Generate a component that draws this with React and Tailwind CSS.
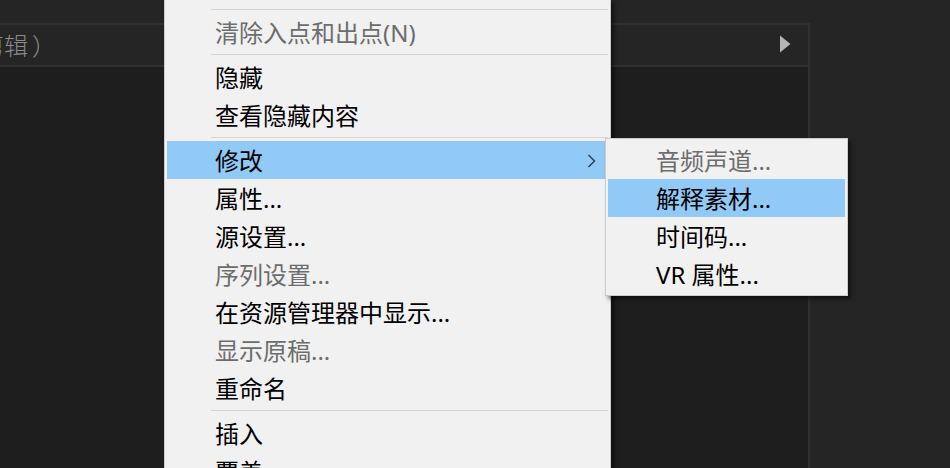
const SANS = "font-['Noto_Sans','Noto_Sans_CJK_SC',sans-serif]";

const menu = [
  { type: 'separator' },
  { label: '清除入点和出点(N)', disabled: true },
  { type: 'separator' },
  { label: '隐藏' },
  { label: '查看隐藏内容' },
  { type: 'separator' },
  { label: '修改', active: true, submenu: true },
  { label: '属性...' },
  { label: '源设置...' },
  { label: '序列设置...', disabled: true },
  { label: '在资源管理器中显示...' },
  { label: '显示原稿...', disabled: true },
  { label: '重命名' },
  { type: 'separator' },
  { label: '插入' },
  { label: '覆盖' },
];

const modifyMenu = [
  { label: '音频声道...', disabled: true },
  { label: '解释素材...', active: true },
  { label: '时间码...' },
  { label: 'VR 属性...' },
];

function Chevron() {
  return (
    <svg className="mr-2 h-4 w-4 shrink-0" viewBox="0 0 16 16" fill="none" aria-hidden="true">
      <path d="M4.5 2 L10.5 8 L4.5 14" stroke="#2b3b48" strokeWidth="1.4" />
    </svg>
  );
}

function MenuItem({ label, disabled, active, submenu }) {
  return (
    <button
      type="button"
      role="menuitem"
      disabled={disabled}
      aria-haspopup={submenu ? 'menu' : undefined}
      aria-expanded={submenu ? true : undefined}
      className={`flex h-[38px] w-full items-center pt-0.5 pl-12 text-left text-2xl whitespace-nowrap ${
        active ? 'bg-[#91c9f7]' : ''
      } ${disabled ? 'text-[#6d6d6d]' : 'text-black'}`}
    >
      <span className="flex-1">{label}</span>
      {submenu && <Chevron />}
    </button>
  );
}

function Menu({ items, label, className }) {
  return (
    <div
      role="menu"
      aria-label={label}
      className={`absolute border border-[#cccccc] bg-[#f1f1f1] shadow-[3px_3px_4px_rgba(0,0,0,0.5)] ${SANS} ${className}`}
    >
      {items.map((item, i) =>
        item.type === 'separator' ? (
          <div key={i} role="separator" className="ml-11 py-[3px]">
            <div className="h-px bg-[#d5d5d5]" />
          </div>
        ) : (
          <MenuItem key={item.label} {...item} />
        )
      )}
    </div>
  );
}

export default function App() {
  return (
    <div className="relative flex h-screen flex-col overflow-hidden bg-[#252525]">
      <section className="mt-[23px] mr-[140px] flex flex-1 flex-col border-t-2 border-r-2 border-[#303030] bg-[#1e1e1e]">
        <header className="flex h-[42px] items-center justify-between border-b-2 border-[#303030] bg-[#252525] pr-4">
          <h1 className="-ml-5 text-2xl font-light whitespace-nowrap text-[#8c8c8c] font-['Noto_Sans_CJK_SC',sans-serif]">
            剪辑<span className="ml-1">）</span>
          </h1>
          <button type="button" aria-label="展开">
            <svg className="h-5 w-3" viewBox="0 0 12 20" aria-hidden="true">
              <path d="M0 0.5 L10.5 9 L0 17.5 Z" fill="#b4b4b4" />
            </svg>
          </button>
        </header>
      </section>
      <Menu
        items={menu}
        label="剪辑"
        className="-top-px left-[164px] w-[447px] pt-1.5 pr-[2px] pl-[2px]"
      />
      <Menu items={modifyMenu} label="修改" className="top-[138px] left-[605px] w-[243px] p-[2px]" />
    </div>
  );
}
